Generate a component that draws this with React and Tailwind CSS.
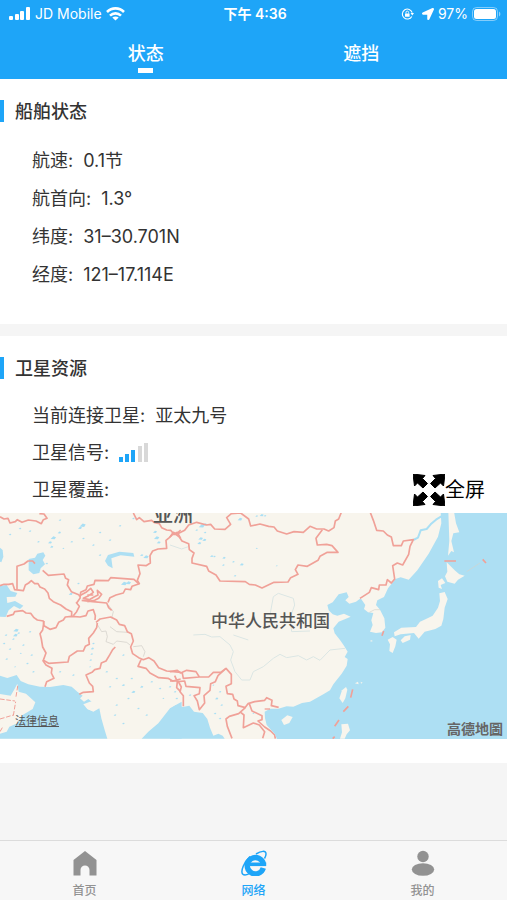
import { useState } from 'react';
import { FaLocationArrow } from 'react-icons/fa';

const TABS = ['状态', '遮挡'];

const SHIP_STATUS = [
  { label: '航速', value: '0.1节' },
  { label: '航首向', value: '1.3°' },
  { label: '纬度', value: '31–30.701N' },
  { label: '经度', value: '121–17.114E' },
];

// Small lakes, [x, y, size]
const WEST_LAKES = [
  [248, 60, 9], [240, 68, 6], [160, 98, 8], [150, 112, 6], [178, 82, 5], [155, 125, 5], [60, 70, 4], [90, 78, 4],
  [30, 88, 4], [115, 110, 4], [250, 100, 4], [300, 82, 4], [360, 62, 4], [330, 105, 4], [280, 120, 4], [465, 80, 6],
  [470, 98, 8], [476, 112, 6], [425, 150, 5], [438, 155, 8], [372, 235, 9], [385, 233, 8], [235, 235, 4], [212, 266, 6],
  [48, 375, 8], [46, 390, 7], [40, 402, 4], [56, 384, 4], [18, 390, 4], [12, 415, 4], [30, 432, 4], [70, 420, 4],
  [62, 445, 3], [95, 450, 4], [20, 462, 4], [82, 475, 4], [45, 485, 3], [100, 500, 4], [280, 415, 4], [277, 430, 5],
  [275, 447, 4], [272, 465, 4], [270, 485, 3], [180, 500, 4], [220, 510, 4], [320, 500, 4], [350, 520, 4], [330, 545, 4],
  [370, 540, 5], [395, 520, 4], [400, 560, 6], [425, 545, 5], [455, 530, 4], [480, 550, 4], [385, 580, 4], [350, 600, 4],
  [345, 630, 4], [370, 655, 4], [415, 610, 4], [440, 630, 4], [370, 450, 4], [300, 150, 4], [190, 130, 3], [140, 175, 4],
  [90, 380, 4], [510, 545, 4], [490, 580, 3], [400, 40, 4], [180, 45, 4], [215, 110, 4],
];

const CENTRAL_LAKES = [
  [95, 62, 9], [105, 58, 6], [80, 75, 4], [92, 100, 7], [103, 104, 6], [88, 114, 6], [105, 82, 4], [210, 42, 7],
  [275, 30, 6], [260, 33, 4], [285, 32, 4], [125, 153, 5], [133, 154, 4], [162, 158, 5], [190, 170, 4], [215, 178, 6],
  [195, 212, 4], [160, 180, 4], [260, 130, 3], [320, 182, 3], [150, 560, 4], [140, 580, 5], [155, 600, 4], [135, 625, 4],
  [150, 640, 4], [130, 540, 3], [15, 560, 4], [60, 570, 4], [20, 580, 4], [250, 625, 3],
];

function Lakes({ lakes }) {
  return lakes.map(([x, y, s]) => (
    <path
      key={`${x}-${y}`}
      d={`M${x - s} ${y + s / 2}l${s} ${-s}l${s} ${s / 3}l${-s / 2} ${s * 0.8}z`}
      fill="#a9dff4"
    />
  ));
}

function MapDrawing() {
  return (
    <svg viewBox="0 0 507 226" preserveAspectRatio="xMidYMid slice" className="block h-full w-full" aria-hidden="true">
      <rect width="507" height="226" fill="#f8f5ed" />

      {/* West: Caspian, Central Asia, India */}
      <g transform="translate(0 -8) scale(0.33333)" strokeLinejoin="round">
        <g fill="#addff3">
          <path d="M0 512L22 519L50 510L62 528L85 538L120 545L150 546L190 540L215 545L232 560L248 572L240 580L252 590L265 582L275 590L255 600L262 612L280 620L298 610L304 640L314 675L322 701H0Z" />
          <path d="M425 701L445 680L475 655L510 610L545 590V701Z" />
          <path d="M0 242L20 240L32 258L52 264L46 275L20 276L22 294L45 288L70 302L60 312L42 303L26 316L17 336L0 335Z" />
          <path d="M86 162L105 158L112 146L130 142L136 152L128 165L135 178L122 190L118 204L100 208L86 196Z" />
          <path d="M315 168L324 150L358 140L400 144L403 155L362 151L334 160L338 190L324 182Z" />
          <path d="M0 128L8 135L10 155L4 172L0 170Z" />
        </g>
        <path d="M0 567L32 572L42 555L52 536L56 560L78 566L106 592L98 612L68 630L52 655L28 665L20 680L0 686Z" fill="#f8f5ed" />
        <path d="M250 598L270 590L298 586L300 605L280 619L262 612Z" fill="#f8f5ed" />
        <Lakes lakes={WEST_LAKES} />
        <g fill="none" stroke="#cfcbc5" strokeWidth="2">
          <path d="M290 355L305 380L318 378L322 395L318 410L340 418L350 408L380 412L390 420M325 300L340 320L335 340M330 365L350 380L385 382M400 425L425 422L435 440L430 455" />
        </g>
        <g fill="none" stroke="#f0a198" strokeWidth="5">
          <path d="M0 35L12 42L24 40L30 54L46 50L52 44L66 52L85 45L108 48L124 56L130 44L141 40L132 27L118 26" />
          <path d="M400 24L410 44L418 38L432 50L455 46L462 52L478 56L485 68L500 75L512 76L522 88L532 82L542 100M542 75L528 88L518 88L508 98L498 106L500 130L474 132L458 138L450 152L451 174L438 182L414 180L420 206L412 226L418 236L396 244L392 254L376 252L370 264L348 270L330 278L324 292" />
          <path d="M416 236L402 223L332 218L325 227L285 226L282 238L262 243L258 254L242 262L240 280L230 294" />
          <path d="M236 274L258 262L272 250L280 262L266 272L250 280L268 284L282 276L294 270L292 256L305 268L296 280L284 286L262 290M262 270L280 270M245 286L278 290L320 294L326 308L335 316M228 292L238 304L230 320L220 332" />
          <path d="M51 252V184L72 177L84 168L98 168L105 176" />
          <path d="M128 196L145 211L192 207L197 220L206 224L202 240L214 260L238 270" />
          <path d="M0 242L12 238L26 238L38 236L44 254L70 257L76 240L86 234L94 227L104 236L114 236L120 246L134 252L144 264L148 280L160 290L182 300L198 312L215 320V334" />
          <path d="M20 334L40 328L44 320L68 317L78 324L92 325L102 338L112 345L130 348L132 362L150 373L168 368L176 352L190 345L196 336L215 334L240 336L258 332L264 318L280 314L286 332L285 345" />
          <path d="M132 348L128 375L120 386L124 402L128 426L138 444L130 466L146 475L204 471L208 454L232 438L250 438L256 424L268 418L266 400L280 384L290 368L292 354" />
          <path d="M128 466L138 480L156 490L154 504L162 520L140 530L135 545M238 568L250 562L280 560L278 544L268 534L258 510L276 502L284 494L300 490L304 474L318 468L330 448L338 434L346 426" />
          <path d="M288 352L300 342L332 336L350 345L358 358L374 362L382 380L394 386L400 408L392 426L398 446L416 458L430 464L446 458L462 468L476 488L500 498L542 502M424 462L414 484L438 490L450 504L476 518L504 520L518 528L542 522M524 512L532 530L530 548L542 560" />
          <path d="M0 582L45 588M48 575L54 538M40 632L47 590M0 642L40 630M0 680L8 666" strokeWidth="3" strokeDasharray="14 5" />
        </g>
      </g>

      {/* Centre: Mongolia, China, Indochina */}
      <g transform="translate(170 -8) scale(0.33333)" strokeLinejoin="round">
        <path d="M0 612L18 600L38 606L58 602L72 620L98 624L112 642L120 668L130 692L145 686L158 692L164 701H0Z" fill="#addff3" />
        <Lakes lakes={CENTRAL_LAKES} />
        <g fill="none" stroke="#dbe6e4" strokeWidth="3">
          <path d="M70 390L105 388L125 396L150 395L180 420L190 440L182 465L195 500L215 525L240 525L250 500L280 485L310 460L330 448L350 458L385 452L410 465L430 455L450 466L480 435L525 430" />
          <path d="M190 390L235 405M300 330L310 275L325 265L370 280L374 300L360 340L365 380L420 378M0 120L35 132L55 125" />
        </g>
        <g fill="none" stroke="#f0a198" strokeWidth="5">
          <path d="M0 96L10 82L20 88L44 76L56 60L80 52L110 60L122 58L134 72L165 73L182 58L170 38L184 26L212 24L236 42L242 63L270 57L296 64L312 66L322 78L350 87L372 80L400 82L420 64L440 72L462 72L476 78L492 68L496 48L506 42L514 22" />
          <path d="M457 74L438 100L442 120L470 118L486 122L504 142L472 142L450 154L444 166L412 184L384 180L376 194L384 208L362 218L354 231L312 232L276 249L256 240L238 238L226 230L150 228L138 210L116 198L110 184L66 174L66 160L72 144L58 134L56 116L36 108L28 96L18 88" />
          <path d="M0 500L22 496L32 504L50 496L78 500L88 516L116 516L130 502L152 502L168 490L184 508L184 536L168 544L172 566L188 568L192 582L202 588L204 602L226 608M36 500L40 520L88 516" />
          <path d="M0 528L24 528L34 546L30 560L40 572V604M24 530L44 528L48 544L90 548L88 566L72 572L82 588L88 614L104 594L102 572L120 556L122 536L136 530L144 512L166 492" />
          <path d="M226 608L206 626L178 634L168 642L172 664L186 700M212 622L222 630L220 668L250 654L268 660L284 680L278 700M222 612L234 596L254 590L284 586L290 578L306 586L304 602L326 607M238 596L246 618L276 632L276 644L264 648L284 666L302 678L314 690L316 701" />
        </g>
      </g>

      {/* East: coast, Korea, Japan */}
      <g transform="translate(330 -8) scale(0.33333)" strokeLinejoin="round">
        <path d="M535 20V705H-158L-165 688L-190 660L-195 640L-196 620L-180 611L-155 611L-130 604L-110 605L-84 594L-60 590L-20 568L0 556L10 538L20 525L35 506L50 482L53 462L44 456L53 440L42 422L30 405L14 385L10 370L26 350L46 342L62 335L42 326L22 332L8 328L-4 316L-8 300L8 292L26 268L50 262L56 276L46 286L58 296L78 290L92 280L106 300L102 312L114 322L130 324L124 346L128 360L120 380L138 384L156 382L166 368L163 340L150 314L138 300L142 286L162 276L174 250L196 222L212 217L236 224L262 196L296 146L324 95L334 55L332 20Z" fill="#addff3" />
        <g fill="#f8f5ed">
          <path d="M355 20H372L378 55L388 82L370 85L364 108L372 142L364 138L354 152L358 108Z" />
          <path d="M350 172L374 196L388 208L404 212L384 224L374 236L352 230L345 214L352 200Z" />
          <path d="M324 228L336 220L346 234L332 240L336 252L326 248Z" />
          <path d="M328 265L344 261L353 282L344 308L340 342L334 362L316 372L302 376L284 380L266 401L252 384L228 386L212 388L194 394L192 382L214 368L258 366L270 350L288 342L308 332L324 308L330 288Z" />
          <path d="M173 404L188 396L200 404L196 424L188 444L178 438L180 418Z" />
          <path d="M212 406L224 394L242 390L240 404L218 414Z" />
          <path d="M28 580L36 556L48 546L52 554L46 580L38 594Z" />
          <path d="M34 658L54 656L60 676L50 688L44 701H30L36 682Z" />
          <path d="M-146 645L-128 631L-112 636L-122 654L-138 660Z" />
          <path d="M75 535L84 530L86 538ZM92 530L98 533L93 536ZM122 405L129 408L122 410Z" />
        </g>
        <path d="M-196 612L-180 612" stroke="#f0a198" strokeWidth="4" />
        <path d="M250 105L264 98L272 76L290 72L302 58L318 44L334 34" fill="none" stroke="#a9dff4" strokeWidth="6" />
        <path d="M118 322L134 314L150 314M410 200L450 174" fill="none" stroke="#d3d3cc" strokeWidth="2" />
        <g fill="none" stroke="#f0a198" strokeWidth="5">
          <path d="M120 20L130 46L140 76L160 78L172 90L184 96L190 122L214 122L220 108L250 104L240 124L236 148L218 180L202 174L188 182L194 222L184 234L172 224L168 240L148 240L146 254L124 248L118 262L90 280" />
          <path d="M343 168H378M458 163L468 174M156 392L161 378M62 578L68 553M40 620L55 604M14 664L27 645M8 701L14 695" />
        </g>
      </g>
    </svg>
  );
}

function SignalIcon() {
  return (
    <svg width="22" height="14" viewBox="0 0 22 14" fill="white" aria-hidden="true">
      <rect x="0" y="9" width="4" height="4" rx="1" />
      <rect x="6" y="7" width="4" height="6" rx="1" />
      <rect x="11" y="4" width="4" height="9" rx="1" />
      <rect x="17" y="0" width="4" height="13" rx="1" />
    </svg>
  );
}

function WifiIcon() {
  return (
    <svg width="19" height="14" viewBox="0 0 19 14" fill="none" stroke="white" strokeWidth="2.6" aria-hidden="true">
      <path d="M1 5C5.800 .2 13.200 .2 18 5" />
      <path d="M4 8.600C7.200 5.600 11.800 5.600 15 8.600" />
      <path d="M9.500 13.600L6.300 10.500C8.200 9 10.800 9 12.700 10.500Z" fill="white" stroke="none" />
    </svg>
  );
}

function RotationLockIcon() {
  return (
    <svg width="13" height="12" viewBox="0 0 13 12" fill="none" stroke="white" aria-hidden="true">
      <path d="M10.800 8.400A5 5 0 1 1 11.200 4.700" strokeWidth="1.100" />
      <path d="M9.500 5H13L11.300 7.400Z" fill="white" stroke="none" />
      <rect x="4" y="5.400" width="4.600" height="3.400" rx=".5" fill="white" stroke="none" />
      <path d="M5 5.600V4.400A1.300 1.300 0 0 1 7.600 4.400V5.600" strokeWidth=".9" />
    </svg>
  );
}

function BatteryIcon() {
  return (
    <svg width="29" height="14" viewBox="0 0 29 14" aria-hidden="true">
      <rect x=".5" y=".5" width="25" height="13" rx="4" fill="none" stroke="white" strokeOpacity=".45" />
      <rect x="2" y="2" width="22" height="10" rx="2.500" fill="white" />
      <path d="M27 4.500C28.800 5.300 28.800 8.700 27 9.500Z" fill="white" fillOpacity=".5" />
    </svg>
  );
}

function FullscreenIcon() {
  const arrow = 'M0 0L12 1.500L9.500 4.500L14.500 9.500L10 14L4.500 9L1.500 12Z';
  return (
    <svg width="32" height="32" viewBox="0 0 32 32" fill="black" stroke="black" strokeLinejoin="round" aria-hidden="true">
      <path d={arrow} />
      <path d={arrow} transform="matrix(-1 0 0 1 32 0)" />
      <path d={arrow} transform="matrix(1 0 0 -1 0 32)" />
      <path d={arrow} transform="matrix(-1 0 0 -1 32 32)" />
    </svg>
  );
}

function SatelliteSignal() {
  return (
    <svg width="29" height="20" viewBox="0 0 29 20" role="img" aria-label="3/5">
      <g fill="#1ea5f8">
        <rect x="0" y="14" width="4" height="5" />
        <rect x="6" y="11" width="4" height="8" />
        <rect x="12" y="7" width="4" height="12" />
      </g>
      <g fill="#d8d8d8">
        <rect x="19" y="3" width="4" height="16" />
        <rect x="25" y="0" width="4" height="19" />
      </g>
    </svg>
  );
}

function HomeIcon() {
  return (
    <svg width="24" height="26" viewBox="0 0 24 26" fill="currentColor" aria-hidden="true">
      <path d="M12 1L23.500 10V25.500H16.500V20A4.500 4.500 0 0 0 7.500 20V25.500H.5V10Z" />
    </svg>
  );
}

function BrowserIcon() {
  return (
    <svg width="26" height="26" viewBox="0 0 26 26" fill="none" stroke="currentColor" aria-hidden="true">
      <path d="M22.300 18A8.200 8.200 0 1 1 22.500 14.200" strokeWidth="5.400" />
      <path d="M9 14.300H25.200" strokeWidth="3.600" />
      <path d="M15 4C20 .8 25.200 .2 25 4C25 5.500 24.500 7 23.500 8.500" strokeWidth="1.500" />
      <path d="M9 6.500C3 12 -.6 21 1.600 24C3.200 25.800 6.500 25 10 22.500" strokeWidth="1.500" />
    </svg>
  );
}

function UserIcon() {
  return (
    <svg width="24" height="26" viewBox="0 0 24 26" fill="currentColor" aria-hidden="true">
      <circle cx="12" cy="6.500" r="5.700" />
      <ellipse cx="12" cy="19.500" rx="11.200" ry="6.300" />
    </svg>
  );
}

const NAV_ITEMS = [
  { label: '首页', icon: <HomeIcon /> },
  { label: '网络', icon: <BrowserIcon /> },
  { label: '我的', icon: <UserIcon /> },
];

function SectionTitle({ children }) {
  return (
    <div className="flex h-[22px] items-end">
      <span className="h-full w-1 bg-[#1ea5f8]" />
      <h2 className="ml-[11px] text-lg leading-5 font-medium">{children}</h2>
    </div>
  );
}

export default function App() {
  const [activeTab, setActiveTab] = useState('状态');
  const [activeNav, setActiveNav] = useState('网络');

  return (
    <div className="flex min-h-screen flex-col bg-[#f5f5f5] font-['Inter','Noto_Sans_CJK_SC',sans-serif] text-[#333]">
      <header className="h-[79px] bg-[#1ea5f8] text-white">
        {/* Status bar */}
        <div className="grid h-7 grid-cols-3 items-center pr-[6px] pl-[9px] text-sm">
          <div className="flex items-center gap-1 whitespace-nowrap">
            <SignalIcon />
            <span>JD Mobile</span>
            <WifiIcon />
          </div>
          <div className="text-center font-semibold">下午 4:36</div>
          <div className="flex items-center justify-end gap-1">
            <RotationLockIcon />
            <FaLocationArrow size={12} className="ml-1" />
            <span>97%</span>
            <BatteryIcon />
          </div>
        </div>

        <nav className="flex px-[38px]">
          {TABS.map((tab) => (
            <button
              key={tab}
              onClick={() => setActiveTab(tab)}
              className="flex flex-1 flex-col items-center pt-3 text-lg font-medium"
            >
              <span>{tab}</span>
              {activeTab === tab && <span className="h-[5px] w-[15px] bg-white" />}
            </button>
          ))}
        </nav>
      </header>

      <main className="flex-1 space-y-3">
        <section className="bg-white pt-[21px] pb-[30px]">
          <SectionTitle>船舶状态</SectionTitle>
          <dl className="mt-5 pl-8 text-lg">
            {SHIP_STATUS.map((row) => (
              <div key={row.label} className="flex h-[38px] items-center gap-[10px]">
                <dt>{row.label}:</dt>
                <dd>{row.value}</dd>
              </div>
            ))}
          </dl>
        </section>

        <section className="bg-white pt-[21px] pb-6">
          <SectionTitle>卫星资源</SectionTitle>
          <dl className="mt-[18px] pr-[22px] pl-8 text-lg">
            <div className="flex h-[37px] items-center gap-[10px]">
              <dt>当前连接卫星:</dt>
              <dd>亚太九号</dd>
            </div>
            <div className="flex h-[37px] items-center gap-[10px]">
              <dt>卫星信号:</dt>
              <dd><SatelliteSignal /></dd>
            </div>
            <div className="flex h-[37px] items-center justify-between">
              <dt>卫星覆盖:</dt>
              <dd>
                <button className="flex items-center text-xl text-black">
                  <FullscreenIcon />
                  全屏
                </button>
              </dd>
            </div>
          </dl>

          {/* Coverage map */}
          <div className="relative mt-[5px] h-[226px] overflow-hidden">
            <MapDrawing />
            <span className="absolute -top-3 left-[153px] text-xl leading-7 font-medium text-[#555]">亚洲</span>
            <span className="absolute top-24 left-[211px] text-[17px] font-medium text-[#555]">中华人民共和国</span>
            <a href="#" className="absolute bottom-[10px] left-[15px] text-[11px] text-[#555] underline">法律信息</a>
            <span className="absolute right-1 bottom-0 text-sm font-bold text-[#666]">高德地圖</span>
          </div>
        </section>
      </main>

      <footer className="h-[60px] border-t border-[#dcdcdc] bg-[#f7f7f7]">
        <nav className="grid grid-cols-3">
          {NAV_ITEMS.map((item) => (
            <button
              key={item.label}
              onClick={() => setActiveNav(item.label)}
              className={`flex flex-col items-center gap-[7px] pt-[9px] text-xs font-medium ${
                activeNav === item.label ? 'text-[#1ea5f8]' : 'text-[#929292]'
              }`}
            >
              {item.icon}
              {item.label}
            </button>
          ))}
        </nav>
      </footer>
    </div>
  );
}
